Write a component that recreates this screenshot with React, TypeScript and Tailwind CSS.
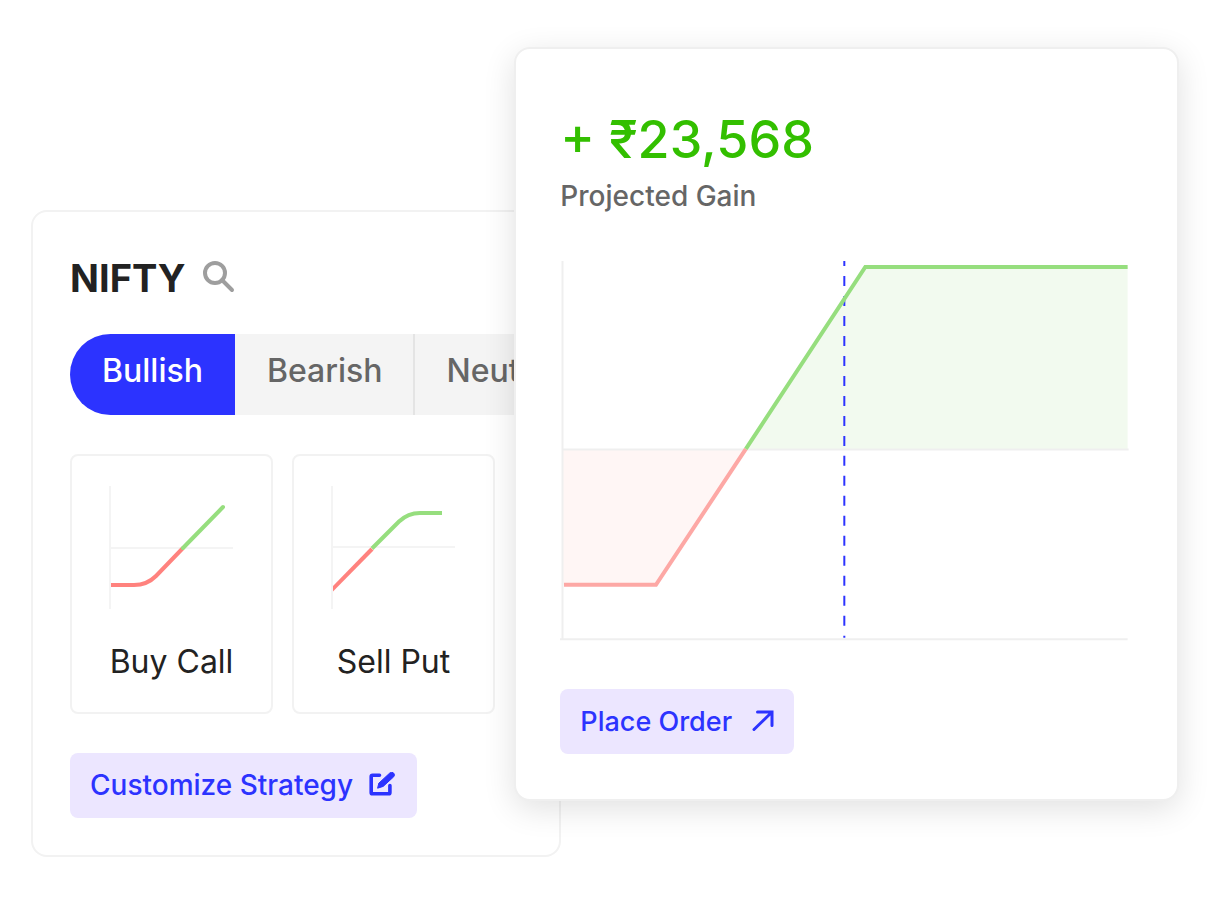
import { useState } from "react";

const tabs = ["Bullish", "Bearish", "Neutral"];

function SearchIcon() {
  return (
    <svg width="34" height="34" viewBox="0 0 34 34" fill="none" stroke="#9e9e9e" strokeWidth="4">
      <circle cx="14" cy="12" r="10" />
      <path d="M21 19L31 29" strokeLinecap="round" />
    </svg>
  );
}

function EditIcon() {
  return (
    <svg width="28" height="28" viewBox="0 0 28 28" fill="none" stroke="#2c33ff">
      <path
        d="M10.5 3.2H3.6Q2.2 3.2 2.2 4.6V20.4Q2.2 21.8 3.6 21.8H19.5Q20.9 21.8 20.9 20.4V13.5"
        strokeWidth="3.6"
        strokeLinecap="round"
      />
      <path
        d="M20.8 1Q22.8 -.6 24.6 1Q26.3 2.8 24.7 4.8L14.2 14.4L8.6 16.2L9.8 11.2Z"
        fill="#2c33ff"
        strokeWidth="1"
        strokeLinejoin="round"
      />
    </svg>
  );
}

function ArrowIcon() {
  return (
    <svg width="22" height="22" viewBox="0 0 22 22" fill="none" stroke="#2c33ff" strokeWidth="3">
      <path d="M5.5 2H20V15.5M20 2L2 19.5" strokeLinecap="round" />
    </svg>
  );
}

function BuyCallChart() {
  return (
    <svg className="h-[124px] w-[126px]" viewBox="0 0 126 124" fill="none">
      <path d="M1 0V123M1 62H124" stroke="#f4f4f4" strokeWidth="2" />
      <path d="M2 99H25Q38 99 47 90L74 62" stroke="#ff827e" strokeWidth="4" />
      <path d="M74 62L114 21" stroke="#96de7e" strokeWidth="4" strokeLinecap="round" />
    </svg>
  );
}

function SellPutChart() {
  return (
    <svg className="h-[124px] w-[126px]" viewBox="0 0 126 124" fill="none">
      <path d="M1 0V123M1 61H124" stroke="#f4f4f4" strokeWidth="2" />
      <path d="M41 62.5L68 35.5Q77 27 89 27H111" stroke="#96de7e" strokeWidth="4" />
      <path d="M2 100L39.5 61.5L42.5 64.5L2 105.5Z" fill="#ff827e" />
    </svg>
  );
}

function PayoffChart() {
  return (
    <svg className="h-auto w-full" viewBox="0 0 569 381" fill="none">
      <path d="M3 190H185L96 325H3Z" fill="#fff6f5" />
      <path d="M185 190L305 7H568V190Z" fill="#f2faef" />
      <path d="M2.5 1V380M0 379.5H568M2 189.5H569" stroke="#efefef" strokeWidth="2" />
      <path
        d="M284.5 1V378"
        stroke="#2c33ff"
        strokeWidth="2"
        strokeDasharray="10 10"
        strokeDashoffset="5"
      />
      <path d="M4 325H96L186 189" stroke="#fda8a5" strokeWidth="4" />
      <path d="M186 189L305.5 7H568" stroke="#96de7e" strokeWidth="4" />
    </svg>
  );
}

const strategies = [
  { name: "Buy Call", Chart: BuyCallChart },
  { name: "Sell Put", Chart: SellPutChart },
];

function StrategyCard() {
  const [active, setActive] = useState("Bullish");

  return (
    <section className="mt-[163px] min-w-0 flex-[529] self-start overflow-hidden rounded-2xl border-2 border-[#f2f2f2] bg-white px-[37px] pt-9 pb-[37px]">
      <div className="flex items-center gap-4">
        <h2 className="text-[38px] leading-[60px] font-bold text-[#222]">NIFTY</h2>
        <button aria-label="Search">
          <SearchIcon />
        </button>
      </div>

      <div className="mt-[26px] flex w-max overflow-hidden rounded-full bg-[#f4f4f4]">
        {tabs.map((tab) => (
          <button
            key={tab}
            onClick={() => setActive(tab)}
            className={`border-r-2 pt-3 pr-[30px] pb-5 pl-8 text-[32px] leading-[49px] font-medium ${
              active === tab
                ? "border-[#2c33ff] bg-[#2c33ff] text-white"
                : "border-[#e4e4e4] text-[#666]"
            }`}
          >
            {tab}
          </button>
        ))}
      </div>

      <div className="mt-[39px] flex gap-[19px]">
        {strategies.map(({ name, Chart }) => (
          <button
            key={name}
            className="flex w-[203px] shrink-0 flex-col items-center rounded-lg border-2 border-[#f2f2f2] pt-[30px] pb-[28px] text-[32px] leading-[44px] text-[#222]"
          >
            <Chart />
            <span className="mt-[30px]">{name}</span>
          </button>
        ))}
      </div>

      <button className="mt-[39px] flex items-center gap-4 rounded-lg bg-[#ece6ff] px-5 py-3 text-[28px] leading-[41px] font-medium text-[#2c33ff]">
        Customize Strategy
        <EditIcon />
      </button>
    </section>
  );
}

function GainCard() {
  return (
    <section className="relative -ml-[47px] min-w-0 flex-[665] rounded-2xl border-2 border-[#efefef] bg-white pt-[52px] pr-12 pb-[45px] pl-[44px] shadow-[0_8px_32px_rgba(0,0,0,0.12)]">
      <p className="text-[52px] leading-[78px] font-medium text-[#33bf00]">+ ₹23,568</p>
      <p className="text-[28px] leading-[34px] font-medium text-[#666]">Projected Gain</p>
      <div className="mt-[47px]">
        <PayoffChart />
      </div>
      <button className="mt-12 flex items-center gap-5 rounded-lg bg-[#ece6ff] px-5 py-3 text-[27px] leading-[41px] font-medium text-[#2c33ff]">
        Place Order
        <ArrowIcon />
      </button>
    </section>
  );
}

export default function App() {
  return (
    <main className="flex min-h-screen items-start bg-white pt-[47px] pr-8 pb-12 pl-[31px] font-['Inter',sans-serif]">
      <StrategyCard />
      <GainCard />
    </main>
  );
}
